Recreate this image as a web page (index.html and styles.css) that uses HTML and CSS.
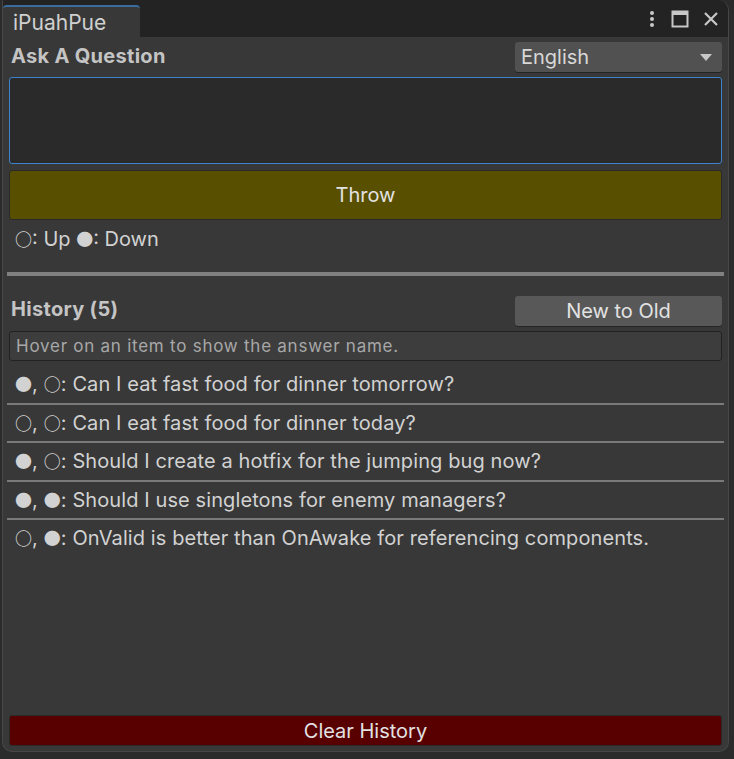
FILE: index.html
```html
<!DOCTYPE html>
<html>
<head>
<meta charset="utf-8">
<link rel="stylesheet" href="styles.css">
</head>
<body>
<div class="window">
  <div class="tabbar">
    <div class="tab">iPuahPue</div>
    <div class="controls">
      <svg class="ico" width="10" height="18" viewBox="0 0 10 18"><circle cx="5" cy="3" r="2" fill="#c8c8c8"/><circle cx="5" cy="9" r="2" fill="#c8c8c8"/><circle cx="5" cy="15" r="2" fill="#c8c8c8"/></svg>
      <svg class="ico" width="18" height="18" viewBox="0 0 18 18"><rect x="1.5" y="1.5" width="15" height="15" fill="none" stroke="#c8c8c8" stroke-width="2"/><rect x="1" y="1" width="16" height="4" fill="#c8c8c8"/></svg>
      <svg class="ico" width="16" height="16" viewBox="0 0 16 16"><path d="M2 2L14 14M14 2L2 14" stroke="#c8c8c8" stroke-width="2.2"/></svg>
    </div>
  </div>
  <div class="content">
    <div class="headrow">
      <div class="title">Ask A Question</div>
      <div class="dropdown"><span>English</span><svg width="14" height="9" viewBox="0 0 14 9"><path d="M1 1H13L7 8Z" fill="#c8c8c8"/></svg></div>
    </div>
    <div class="textarea"></div>
    <div class="btn throw">Throw</div>
    <div class="legend"><span class="sym">○</span>: Up <span class="sym">●</span>: Down</div>
    <div class="divider"></div>
    <div class="histrow">
      <div class="title">History (5)</div>
      <div class="btn order">New to Old</div>
    </div>
    <div class="hint">Hover on an item to show the answer name.</div>
    <div class="list">
      <div class="item"><span class="sym">●</span>, <span class="sym">○</span>: Can I eat fast food for dinner tomorrow?</div>
      <div class="item"><span class="sym">○</span>, <span class="sym">○</span>: Can I eat fast food for dinner today?</div>
      <div class="item"><span class="sym">●</span>, <span class="sym">○</span>: Should I create a hotfix for the jumping bug now?</div>
      <div class="item"><span class="sym">●</span>, <span class="sym">●</span>: Should I use singletons for enemy managers?</div>
      <div class="item last"><span class="sym">○</span>, <span class="sym">●</span>: OnValid is better than OnAwake for referencing components.</div>
    </div>
    <div class="spacer"></div>
    <div class="btn clear">Clear History</div>
  </div>
</div>
</body>
</html>
```
FILE: styles.css
```css
html, body {
  margin: 0;
  padding: 0;
}
body {
  width: 734px;
  height: 759px;
  background: #2b2b2b;
  font-family: Inter, "Noto Sans", sans-serif;
  color: #d2d2d2;
  overflow: hidden;
}
.window {
  margin-left: 2px;
  width: 727px;
  height: 752px;
  background: #383838;
  border-radius: 2px 10px 10px 10px;
  border: 1px solid #474747;
  border-top: none;
  box-sizing: border-box;
  display: flex;
  flex-direction: column;
  overflow: hidden;
}
.tabbar {
  height: 37px;
  flex: none;
  background: #232323;
  display: flex;
  align-items: flex-end;
}
.tab {
  width: 127px;
  height: 30px;
  background: #383838;
  border-top: 2px solid #3a6d9e;
  border-radius: 4px 4px 0 0;
  font-size: 21px;
  line-height: 31px;
  padding-left: 10px;
  color: #d0d0d0;
}
.controls {
  margin-left: auto;
  align-self: center;
  display: flex;
  align-items: center;
  gap: 14px;
  padding-right: 9px;
  padding-top: 1px;
}
.ico { display: block; }
.content {
  flex: 1;
  display: flex;
  flex-direction: column;
  padding: 0 6px 5px 6px;
}
.headrow, .histrow {
  display: flex;
  justify-content: space-between;
  align-items: center;
}
.headrow { margin-top: 5px; }
.title {
  font-weight: 650;
  font-size: 20px;
  letter-spacing: 0.3px;
  color: #c4c4c4;
  padding-left: 2px;
}
.headrow .title { margin-top: -2px; }
.dropdown {
  width: 207px;
  height: 30px;
  background: #515151;
  border-radius: 3px;
  box-shadow: 0 1px 0 #242424;
  display: flex;
  align-items: center;
  justify-content: space-between;
  padding: 0 9px 0 6px;
  box-sizing: border-box;
  font-size: 20px;
  color: #d8d8d8;
}
.textarea {
  margin-top: 5px;
  height: 87px;
  background: #2a2a2a;
  border: 1px solid #3f82cc;
  border-radius: 3px;
  box-sizing: border-box;
}
.btn {
  border-radius: 3px;
  display: flex;
  align-items: center;
  justify-content: center;
  font-size: 20px;
  color: #e2e2e2;
  box-sizing: border-box;
}
.throw {
  margin-top: 6px;
  height: 50px;
  background: #584f00;
  border: 1px solid #2a2a2a;
}
.sym {
  font-family: "Noto Sans CJK JP", sans-serif;
  font-size: 17px;
  font-weight: 700;
  line-height: 1;
}
.legend {
  margin-top: 7px;
  padding-left: 6px;
  font-size: 20px;
  line-height: 24px;
}
.divider {
  margin: 21px -2px 0 -2px;
  height: 4px;
  background: #808080;
}
.histrow { margin-top: 20px; }
.histrow .title { margin-top: -5px; }
.order {
  width: 207px;
  height: 30px;
  background: #585858;
  box-shadow: 0 1px 0 #242424;
}
.hint {
  margin-top: 5px;
  height: 30px;
  background: #3d3d3d;
  border: 1px solid #222;
  border-radius: 3px;
  box-sizing: border-box;
  font-size: 17px;
  letter-spacing: 0.75px;
  color: #a8a8a8;
  padding-left: 6px;
  line-height: 28px;
}
.list {
  margin: 5px -2px 0 -2px;
}
.item {
  border-bottom: 2px solid #7a7a7a;
  font-size: 20px;
  letter-spacing: 0.1px;
  line-height: 37px;
  padding-left: 8px;
  height: 36.5px;
}
.item.last { border-bottom: none; }
.spacer { flex: 1; }
.clear {
  height: 31px;
  background: #580000;
  border: 1px solid #2a2a2a;
}
```
